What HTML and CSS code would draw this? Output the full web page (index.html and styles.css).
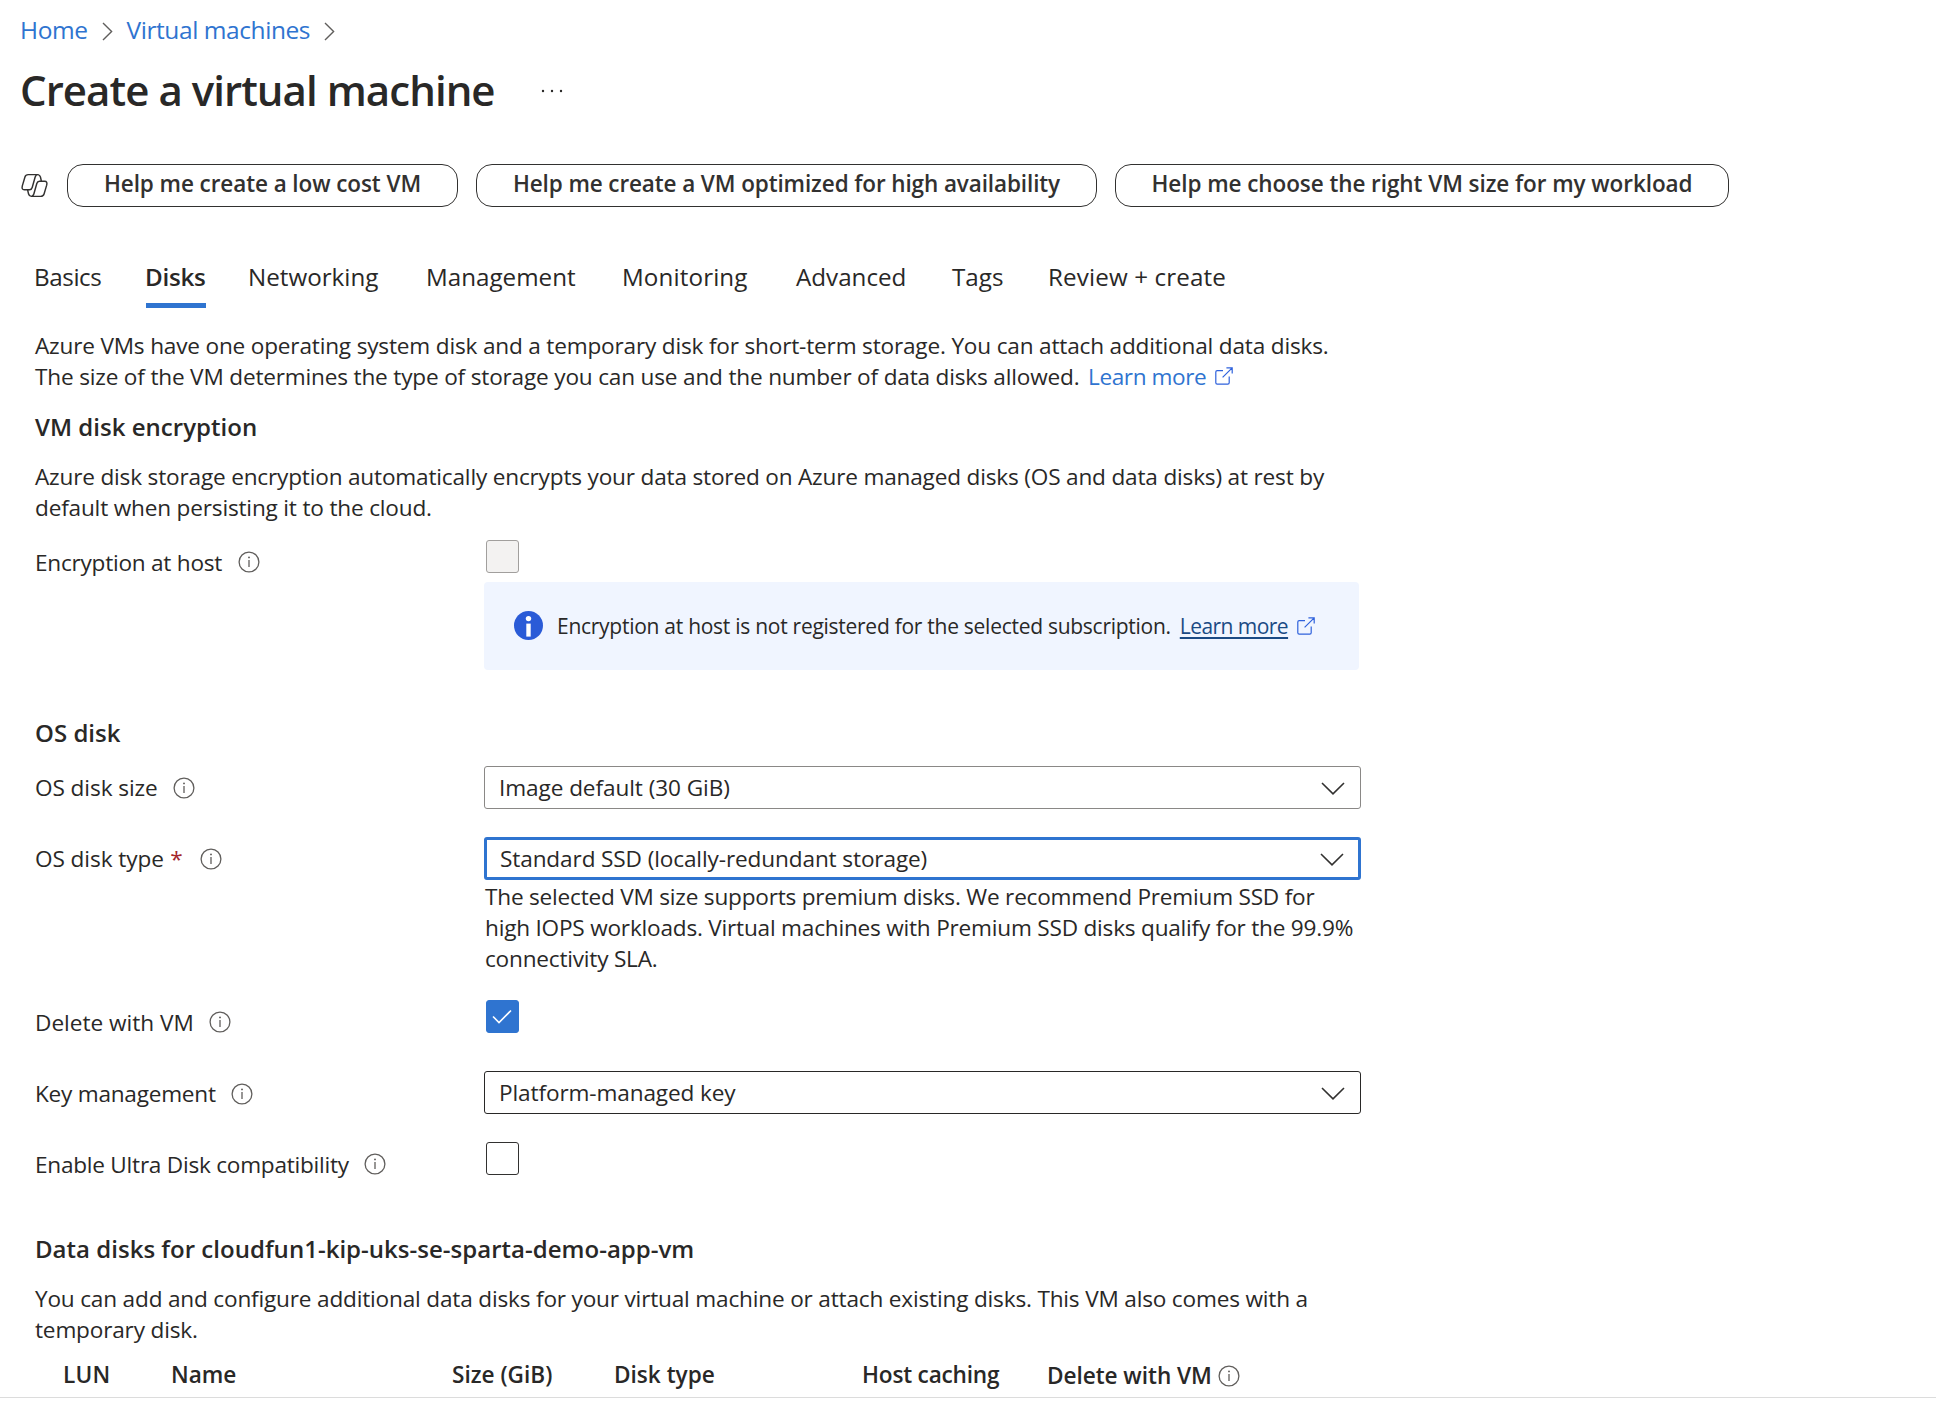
FILE: index.html
```html
<!DOCTYPE html>
<html lang="en">
<head>
<meta charset="utf-8">
<title>Create a virtual machine</title>
<link rel="stylesheet" href="styles.css">
</head>
<body>
<svg class="defs" aria-hidden="true">
  <symbol id="info" viewBox="0 0 22 22"><circle cx="11" cy="11" r="9.9" fill="none" stroke="currentColor" stroke-width="1.3"/><path d="M11 9v7" stroke="currentColor" stroke-width="1.3"/><circle cx="11" cy="6.4" r=".95" fill="currentColor"/></symbol>
  <symbol id="crumb" viewBox="0 0 11 19"><path d="M1 1l8.6 8.5L1 18" fill="none" stroke="currentColor" stroke-width="1.4"/></symbol>
  <symbol id="down" viewBox="0 0 24 13"><path d="M1 1l11 10.8L23 1" fill="none" stroke="currentColor" stroke-width="1.6"/></symbol>
  <symbol id="external" viewBox="0 0 18 18"><path d="M8 3.6H2.2Q.8 3.6 .8 5v10.8q0 1.4 1.4 1.4h10.6q1.4 0 1.4-1.4V9.5M7.6 10.4L17.2.8M11.4.8h5.8v5.8" fill="none" stroke="currentColor" stroke-width="1.2"/></symbol>
</svg>

<nav class="breadcrumb">
  <a class="link">Home</a><svg class="crumb"><use href="#crumb"/></svg><a class="link">Virtual machines</a><svg class="crumb"><use href="#crumb"/></svg>
</nav>

<header class="title-bar">
  <h1 class="title">Create a virtual machine</h1>
  <svg class="more" viewBox="0 0 22 4"><circle cx="2" cy="2" r="1.2"/><circle cx="11" cy="2" r="1.2"/><circle cx="20" cy="2" r="1.2"/></svg>
</header>

<div class="suggestions">
  <svg class="copilot" viewBox="0 0 82 74"><path d="M54 4H22Q14 4 12 11L4 38Q1 50 10 50H26Q32 50 34 43L43 11Q45 4 51 4Q57 4 59 11L62 24M28 70H60Q68 70 70 63L78 36Q81 24 72 24H56Q50 24 48 31L39 63Q37 70 31 70Q25 70 23 63L20 50"/></svg>
  <button class="pill pill-cost">Help me create a low cost VM</button>
  <button class="pill pill-availability">Help me create a VM optimized for high availability</button>
  <button class="pill pill-size">Help me choose the right VM size for my workload</button>
</div>

<div class="tabs">
  <a class="tab tab-tight">Basics</a>
  <a class="tab tab-active">Disks</a>
  <a class="tab">Networking</a>
  <a class="tab">Management</a>
  <a class="tab tab-wide">Monitoring</a>
  <a class="tab">Advanced</a>
  <a class="tab">Tags</a>
  <a class="tab tab-wide">Review + create</a>
</div>

<main class="content">
  <p class="text">Azure VMs have one operating system disk and a temporary disk for short-term storage. You can attach additional data disks.<br>The size of the VM determines the type of storage you can use and the number of data disks allowed. <a class="link learn">Learn more</a><svg class="external"><use href="#external"/></svg></p>

  <h2 class="heading">VM disk encryption</h2>
  <p class="text">Azure disk storage encryption automatically encrypts your data stored on Azure managed disks (OS and data disks) at rest by<br>default when persisting it to the cloud.</p>

  <div class="row row-encryption">
    <div class="label label-low">Encryption at host<svg class="info"><use href="#info"/></svg></div>
    <div class="control">
      <span class="checkbox checkbox-disabled"></span>
      <div class="notice">
        <svg class="notice-icon" viewBox="0 0 29 29"><circle cx="14.5" cy="14.5" r="14.5" fill="#2a5bd7"/><circle cx="14.5" cy="7.6" r="2.7" fill="#fff"/><path d="M14.5 12.6v13" stroke="#fff" stroke-width="4.4"/></svg>
        <span class="notice-text">Encryption at host is not registered for the selected subscription.</span>
        <a class="notice-link">Learn more</a>
        <svg class="external notice-external"><use href="#external"/></svg>
      </div>
    </div>
  </div>

  <h2 class="heading heading-os">OS disk</h2>
  <div class="row">
    <div class="label label-mid label-wide">OS disk size<svg class="info"><use href="#info"/></svg></div>
    <div class="control"><div class="select select-soft"><span class="value-image">Image default (30 GiB)</span><svg class="down"><use href="#down"/></svg></div></div>
  </div>
  <div class="row row-type">
    <div class="label label-mid label-wide">OS disk type<span class="required">*</span><svg class="info info-required"><use href="#info"/></svg></div>
    <div class="control">
      <div class="select select-focus"><span>Standard SSD (locally-redundant storage)</span><svg class="down"><use href="#down"/></svg></div>
      <p class="text hint">The selected VM size supports premium disks. We recommend Premium SSD for<br>high IOPS workloads. Virtual machines with Premium SSD disks qualify for the 99.9%<br>connectivity SLA.</p>
    </div>
  </div>
  <div class="row row-delete">
    <div class="label label-low label-delete">Delete with VM<svg class="info"><use href="#info"/></svg></div>
    <div class="control"><span class="checkbox checkbox-on"><svg class="check" viewBox="0 0 20 15"><path d="M1 7.5l6 6L19 1.5"/></svg></span></div>
  </div>
  <div class="row row-key">
    <div class="label label-key">Key management<svg class="info"><use href="#info"/></svg></div>
    <div class="control"><div class="select"><span>Platform-managed key</span><svg class="down"><use href="#down"/></svg></div></div>
  </div>
  <div class="row row-ultra">
    <div class="label label-low">Enable Ultra Disk compatibility<svg class="info"><use href="#info"/></svg></div>
    <div class="control"><span class="checkbox"></span></div>
  </div>

  <h2 class="heading heading-data">Data disks for cloudfun1-kip-uks-se-sparta-demo-app-vm</h2>
  <p class="text">You can add and configure additional data disks for your virtual machine or attach existing disks. This VM also comes with a<br>temporary disk.</p>

  <div class="disk-columns">
    <span class="lun">LUN</span>
    <span>Name</span>
    <span>Size (GiB)</span>
    <span>Disk type</span>
    <span class="caching">Host caching</span>
    <span class="delete-column">Delete with VM<svg class="info info-column"><use href="#info"/></svg></span>
  </div>
</main>
<footer class="footer"></footer>
</body>
</html>
```
FILE: styles.css
```css
* { box-sizing: border-box; }
body {
  margin: 0;
  height: 1426px;
  display: flex;
  flex-direction: column;
  overflow: hidden;
  background: #fff;
  color: #292827;
  font-family: "Open Sans", "Noto Sans", sans-serif;
  font-size: 22.6px;
  line-height: 31px;
  white-space: nowrap;
}
h1, h2, p { margin: 0; font-weight: 600; }
svg { display: block; flex: none; }
.defs { position: absolute; width: 0; height: 0; }
.link { color: #2f74d0; }

.breadcrumb {
  display: flex;
  align-items: center;
  height: 35px;
  margin-top: 12px;
  padding-left: 20px;
  font-size: 24.5px;
  letter-spacing: -0.43px;
}
.crumb { width: 11px; height: 19px; margin: 3px 14px 0 14px; color: #605e5c; }

.title-bar { display: flex; align-items: center; height: 56px; margin-top: 15px; padding-left: 20px; }
.title { font-size: 42px; line-height: 56px; letter-spacing: -0.95px; }
.more { width: 22px; height: 4px; margin: 2px 0 0 46px; fill: #292827; }

.suggestions { display: flex; align-items: flex-start; height: 43px; margin-top: 46px; padding-left: 21px; }
.copilot { width: 27px; height: 25px; margin: 9px 19px 0 0; fill: none; stroke: #323130; stroke-width: 4.4; }
.pill {
  height: 43px;
  margin: 0 18px 0 0;
  padding: 0 0 4px;
  border: 1.5px solid #323130;
  border-radius: 16px;
  background: #fff;
  color: #323130;
  font: 600 22.5px/31px "Open Sans", "Noto Sans", sans-serif;
}
.pill-cost { width: 391px; letter-spacing: -0.08px; }
.pill-availability { width: 621px; letter-spacing: -0.11px; }
.pill-size { width: 614px; letter-spacing: -0.07px; }

.tabs {
  display: grid;
  grid-template-columns: 112px 102px 178px 196px 174px 156px 96px auto;
  justify-content: start;
  height: 59px;
  margin-top: 42px;
  padding-left: 34px;
  font-size: 24.2px;
  line-height: 52px;
}
.tab { padding-top: 2px; }
.tab-tight { letter-spacing: -0.4px; }
.tab-wide { letter-spacing: 0.12px; }
.tab-active {
  width: 60px;
  border-bottom: 5px solid #2f74d0;
  font-weight: 600;
  text-indent: -1px;
  letter-spacing: -0.27px;
}

.content { flex: none; height: 1089px; padding: 22px 0 0 35px; }
.text { font-weight: 400; letter-spacing: -0.18px; }
.learn { margin-left: 3px; letter-spacing: -0.43px; }
.external { display: inline-block; width: 18px; height: 18px; margin-left: 9px; vertical-align: 0; color: #2f62dc; }
.heading { margin: 19px 0; font-size: 24px; line-height: 31px; letter-spacing: 0.02px; }

.row { display: grid; grid-template-columns: 449px 877px; align-items: start; }
.label { display: flex; align-items: center; height: 31px; letter-spacing: -0.24px; }
.label-low { margin-top: 6.5px; }
.label-mid { margin-top: 6px; }
.label-key { margin-top: 7px; }
.label-wide { letter-spacing: -0.08px; }
.label-delete { letter-spacing: 0; }
.info { width: 22px; height: 22px; margin-left: 15.5px; color: #605e5c; }
.required { margin-left: 6.5px; color: #a4262c; }
.info-required { margin-left: 17px; }
.row-encryption { height: 130px; margin-top: 17px; }

.checkbox {
  display: grid;
  place-items: center;
  width: 33px;
  height: 33px;
  margin-left: 2px;
  border: 1.5px solid #323130;
  border-radius: 3px;
}
.checkbox-disabled { border-color: #a19f9d; background: #f3f2f1; }
.checkbox-on { border-color: #2f74d0; background: #2f74d0; }
.check { width: 20px; height: 15px; margin-right: 1px; fill: none; stroke: #fff; stroke-width: 1.6; }

.notice {
  display: flex;
  align-items: center;
  width: 875px;
  height: 88px;
  margin-top: 9px;
  padding-left: 30px;
  border-radius: 4px;
  background: #f0f5ff;
  font-size: 21px;
}
.notice-icon { width: 29px; height: 29px; margin-bottom: 1px; }
.notice-text { margin-left: 14px; letter-spacing: -0.27px; }
.notice-link {
  margin-left: 9px;
  color: #1b4a84;
  letter-spacing: -0.55px;
  text-decoration: underline;
  text-decoration-thickness: 1.5px;
  text-underline-offset: 3px;
}
.notice-external { margin: 0 0 1px 9px; }

.heading-os { margin: 47px 0 18px; }
.select {
  display: flex;
  align-items: center;
  justify-content: space-between;
  height: 43px;
  padding: 0 15px 0 14px;
  border: 1.5px solid #292827;
  border-radius: 3px;
  letter-spacing: -0.12px;
}
.select-soft { border-color: #8a8886; }
.select-focus { padding: 0 14px 0 13px; border: 3px solid #2f74d0; }
.value-image { letter-spacing: -0.08px; }
.down { width: 24px; height: 13px; margin-top: 2px; color: #323130; }
.row-type { margin-top: 28px; }
.hint { margin: 1px 0 0 1px; letter-spacing: -0.21px; }
.row-delete { height: 38px; margin-top: 26px; }
.row-key { margin-top: 33px; }
.row-ultra { height: 38px; margin-top: 28px; }
.heading-data { margin-top: 53px; }

.disk-columns {
  display: grid;
  grid-template-columns: 108px 281px 162px 248px 185px auto;
  justify-content: start;
  margin-top: 14px;
  padding-left: 28px;
  font-weight: 600;
}
.lun { letter-spacing: 0.2px; }
.caching { letter-spacing: -0.19px; }
.delete-column { display: flex; align-items: center; padding-top: 1px; letter-spacing: -0.05px; }
.info-column { margin-left: 6px; }
.footer { flex: 1; border-top: 1.5px solid #dcdcdc; background: #fff; }
```
